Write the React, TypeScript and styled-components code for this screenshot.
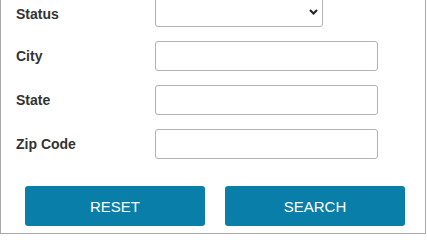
import React from "react";
import styled, { createGlobalStyle } from "styled-components";

const Global = createGlobalStyle`
  html, body { margin: 0; padding: 0; background: #ffffff; overflow: hidden; }
  body { font-family: "Liberation Sans", Arial, sans-serif; }
  * { box-sizing: border-box; }
`;

const Panel = styled.div`
  width: 426px;
  margin-top: -4px;
  border: 1px solid #a9a9a9;
  background: #ffffff;
  padding: 0 0 7px 0;
`;

const Fields = styled.div`
  display: flex;
  flex-direction: column;
  gap: 14px;
`;

const Row = styled.div`
  display: grid;
  grid-template-columns: 154px 1fr;
  align-items: center;
  height: 30px;
`;

const Label = styled.label<{ $shift?: number }>`
  padding-left: 15px;
  padding-top: ${(p) => (p.$shift ? `${p.$shift}px` : "0")};
  font-size: 14px;
  font-weight: 700;
  color: #333333;
`;

const TextInput = styled.input`
  width: 223px;
  height: 30px;
  border: 1px solid #b3b3b3;
  border-radius: 3px;
  background: #ffffff;
  padding: 0 8px;
  font-family: "Liberation Sans", Arial, sans-serif;
  font-size: 14px;
  outline: none;
`;

const SelectWrap = styled.div`
  position: relative;
  width: 168px;
  height: 30px;
`;

const Select = styled.select`
  appearance: none;
  -webkit-appearance: none;
  width: 100%;
  height: 100%;
  border: 1px solid #b3b3b3;
  border-radius: 3px;
  background: #ffffff;
  padding: 0 24px 0 8px;
  font-family: "Liberation Sans", Arial, sans-serif;
  font-size: 14px;
  outline: none;
`;

const Chevron = styled.svg`
  position: absolute;
  right: 5px;
  top: 12px;
  pointer-events: none;
`;

const Actions = styled.div`
  display: flex;
  gap: 20px;
  padding-left: 24px;
  margin-top: 27px;
`;

const Button = styled.button`
  width: 180px;
  height: 40px;
  border: none;
  border-radius: 3px;
  background: #087ea8;
  color: #ffffff;
  font-family: "Liberation Sans", Arial, sans-serif;
  font-size: 15px;
  text-transform: uppercase;
  cursor: pointer;
  padding: 0;
`;

export default function App() {
  return (
    <>
      <Global />
      <Panel>
        <Fields>
          <Row>
            <Label $shift={3}>Status</Label>
            <SelectWrap>
              <Select defaultValue="">
                <option value=""></option>
              </Select>
              <Chevron width="9" height="6" viewBox="0 0 9 6">
                <path d="M1 1 L4.5 4.5 L8 1" fill="none" stroke="#222" strokeWidth="2" />
              </Chevron>
            </SelectWrap>
          </Row>
          <Row>
            <Label>City</Label>
            <TextInput type="text" />
          </Row>
          <Row>
            <Label>State</Label>
            <TextInput type="text" />
          </Row>
          <Row>
            <Label>Zip Code</Label>
            <TextInput type="text" />
          </Row>
        </Fields>
        <Actions>
          <Button>Reset</Button>
          <Button>Search</Button>
        </Actions>
      </Panel>
    </>
  );
}
